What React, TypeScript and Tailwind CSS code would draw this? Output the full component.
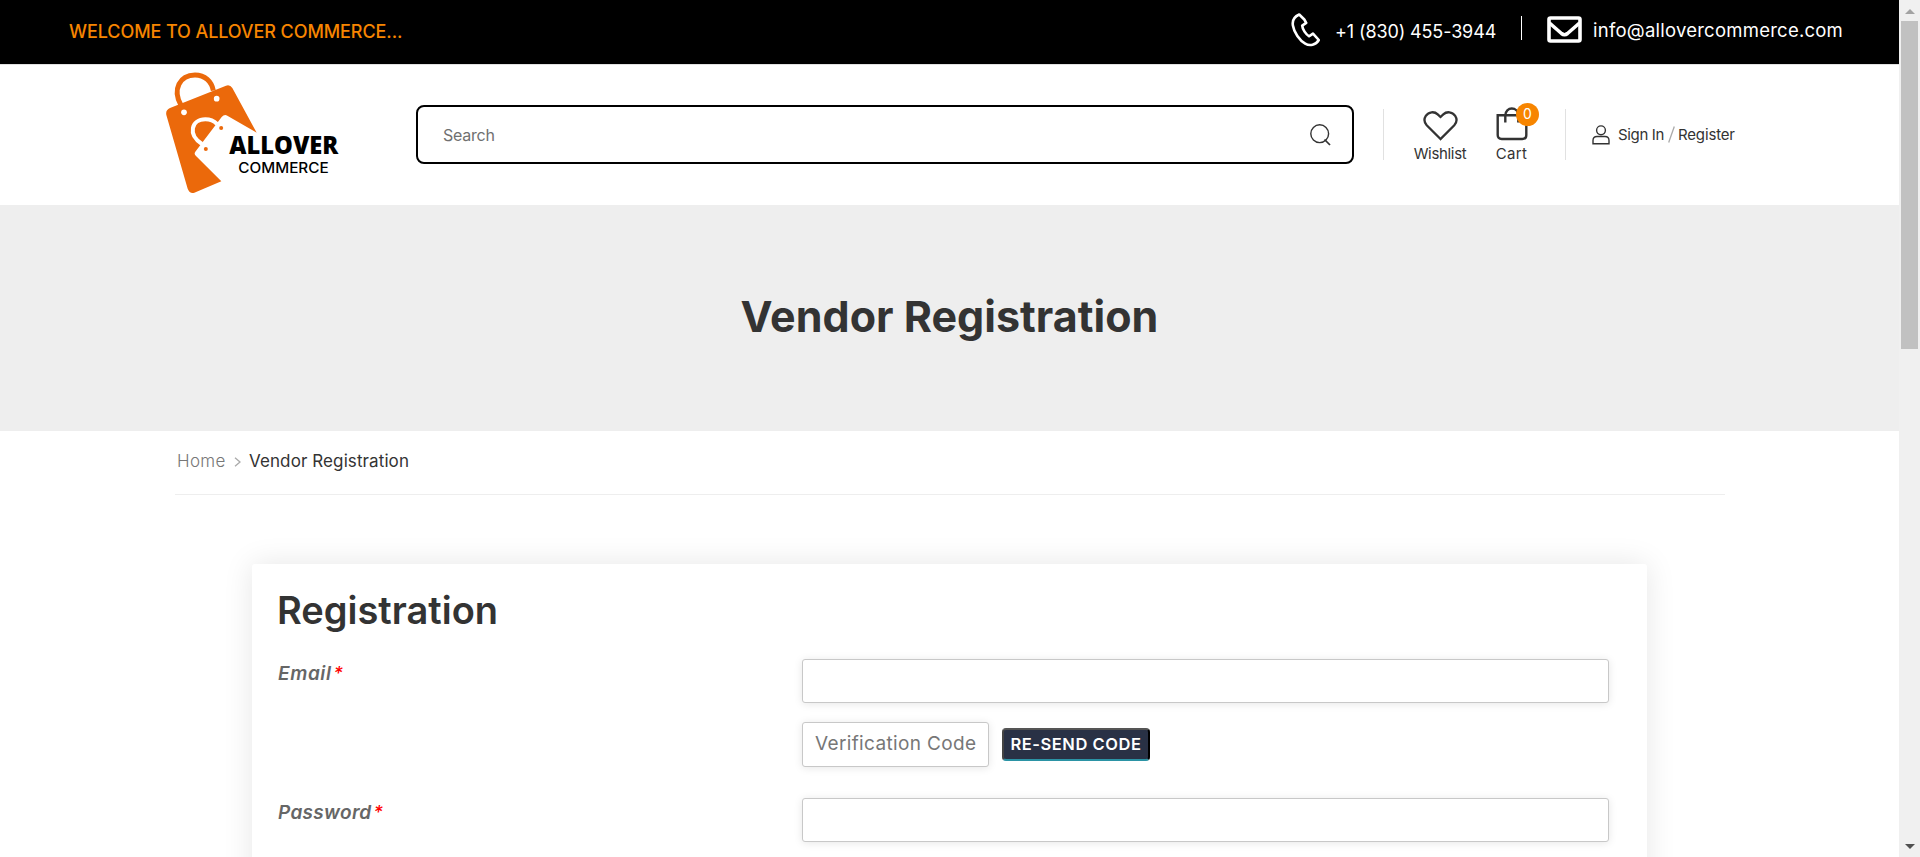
import type { ReactNode } from "react";

function Logo() {
  return (
    <svg viewBox="45 30 525 375" className="h-[125px] w-[175px] shrink-0" aria-label="Allover Commerce">
      <path d="M93 136C66 88 90 45 135 45c30 0 50 20 55 47" fill="none" stroke="#eb690b" strokeWidth="15" />
      <path
        d="M60 144 228 77q12-4 19 7l73 134-88-51q-9-5-17 4l-79 104q-5 7 2 13l76 76-81 34q-14 4-20-12L49 165q-3-15 11-21Z"
        fill="#eb690b"
      />
      <path d="M156 252C112 224 124 178 166 178c14 0 26 5 35 14" fill="none" stroke="#fff" strokeWidth="12" />
      <circle cx="102" cy="157" r="8.5" fill="#fff" />
      <circle cx="200" cy="116" r="8.5" fill="#fff" />
      <circle cx="213.500" cy="204" r="6" fill="#eb690b" />
      <circle cx="167.500" cy="267" r="6" fill="#eb690b" />
      <text x="238" y="281" textLength="327" lengthAdjust="spacingAndGlyphs" fontSize="73" fontWeight="800" className="font-['Open_Sans',sans-serif]">ALLOVER</text>
      <text x="265" y="339" textLength="271" lengthAdjust="spacingAndGlyphs" fontSize="43" fontWeight="500" className="font-['Inter',sans-serif]">COMMERCE</text>
    </svg>
  );
}

function PhoneIcon() {
  return (
    <svg viewBox="0 0 30 34" className="h-[34px] w-[30px]" fill="none" stroke="#fff" strokeWidth="2.6" strokeLinejoin="round">
      <path d="M8.200 1.500C3.600 3.500 1.100 7.500 1.900 12.500c1.100 7 6.700 15 12.300 18.200 4.600 2.600 10.500 1.400 13.600-3.700L22 20.600l-3.800 2.700c-3.400-1.800-6.700-7-7-10.700l4-2.700L13.300 6.500Z" />
    </svg>
  );
}

function MailIcon() {
  return (
    <svg viewBox="0 0 35 27" className="h-[27px] w-[35px]" fill="none" stroke="#fff">
      <rect x="2" y="2" width="31" height="23" rx="1.500" strokeWidth="3.600" />
      <path d="m2.500 7 12 10.500q3 2.500 6 0L32.500 7" strokeWidth="3.600" />
    </svg>
  );
}

function SearchIcon() {
  return (
    <svg viewBox="0 0 21 22" className="h-[22px] w-[21px]" fill="none" stroke="#333" strokeWidth="1.400">
      <circle cx="9.700" cy="9.700" r="8.900" />
      <path d="m14.500 15.500 5.500 5.500" strokeWidth="1.700" />
    </svg>
  );
}

function HeartIcon() {
  return (
    <svg viewBox="0 0 35 30" className="h-[30px] w-[35px]" fill="none" stroke="#333" strokeWidth="2.300">
      <path d="M17.500 28 3.700 14.200C1.300 11.500 1 7.700 2.800 4.900 5.700.6 11.300.1 14.700 3.400L17.500 6l2.800-2.600c3.400-3.300 9-2.800 11.900 1.500 1.800 2.800 1.500 6.600-.9 9.300Z" />
    </svg>
  );
}

function CartIcon() {
  return (
    <svg viewBox="0 0 32 34" className="h-[34px] w-[32px]" fill="none" stroke="#333" strokeWidth="2.400">
      <path d="M1.700 8.200H30.300V28q0 4-4 4H5.700q-4 0-4-4Z" />
      <path d="M9.300 15.500V8.500c0-9.300 13-9.300 13 0v7" />
    </svg>
  );
}

function UserIcon() {
  return (
    <svg viewBox="0 0 18 20" className="h-[20px] w-[18px]" fill="none" stroke="#333" strokeWidth="1.400">
      <circle cx="9" cy="5.300" r="4.400" />
      <path d="M1 18.800v-3.300q0-4 4-4h8q4 0 4 4v3.300Z" />
    </svg>
  );
}

function Field({ label, children }: { label: ReactNode; children: ReactNode }) {
  return (
    <div className="flex">
      <label className="mt-[3px] h-6 w-[525px] shrink-0 pl-px text-[19px] leading-6 font-semibold text-[#666] italic">
        {label}
        <span className="ml-[2px] text-[18px] font-medium text-[#f00]">*</span>
      </label>
      <div>{children}</div>
    </div>
  );
}

const inputStyle =
  "block rounded-[3px] border border-[#c8c8c8] bg-white shadow-[0_1px_8px_rgba(0,0,0,0.1)] outline-none";

function Scrollbar() {
  return (
    <div className="flex w-[21px] shrink-0 flex-col items-center bg-[#f0f0f0]">
      <div className="flex h-[21px] items-center">
        <svg viewBox="0 0 10 5" className="mt-0.5 h-[5px] w-[10px]"><path d="M0 5 5 0l5 5Z" fill="#a3a3a3" /></svg>
      </div>
      <div className="h-[328px] w-[17px] bg-[#c1c1c1]" />
      <div className="mt-auto flex h-[21px] items-center">
        <svg viewBox="0 0 10 5" className="h-[5px] w-[10px]"><path d="m0 0 5 5 5-5Z" fill="#505050" /></svg>
      </div>
    </div>
  );
}

export default function App() {
  return (
    <div className="flex h-[857px] w-[1920px] overflow-hidden bg-white font-['Inter',sans-serif] text-[#333]">
      <div className="flex h-full w-[1899px] flex-col overflow-hidden">
        <div className="flex h-[65px] shrink-0 items-center border-b border-[#e1e1e1] bg-black pl-[69px] text-[18px] whitespace-nowrap text-white">
          <span className="-mt-[2px] w-[1222px] font-medium tracking-[-0.09px] text-[#f78500]">WELCOME TO ALLOVER COMMERCE...</span>
          <div className="-mt-[5px] w-[44px]"><PhoneIcon /></div>
          <span className="-mt-[2px] w-[186px] tracking-[-0.12px]">+1 (830) 455-3944</span>
          <span className="-mt-[8px] h-6 w-px shrink-0 bg-white" />
          <div className="-mt-[6px] ml-[25px] w-[46px]"><MailIcon /></div>
          <span className="-mt-0.5 text-[18.5px] tracking-[0.24px]">info@allovercommerce.com</span>
        </div>

        <header className="flex h-[140px] shrink-0 items-center pb-px pl-[165px] whitespace-nowrap">
          <div className="-mt-[5px] w-[251px]"><Logo /></div>
          <div className="flex h-[59px] w-[938px] items-center justify-between rounded-lg border-2 border-black pr-[21px] pl-[25px]">
            <input
              type="text"
              placeholder="Search"
              className="w-[400px] bg-transparent text-[16px] tracking-[-0.22px] outline-none placeholder:text-[#707070]"
            />
            <div className="pt-px"><SearchIcon /></div>
          </div>
          <span className="ml-[29px] h-[51px] w-px bg-[#e1e1e1]" />
          <a className="mt-px ml-[29px] flex h-[56px] w-[54px] flex-col items-center">
            <div className="flex h-[38px] items-center"><HeartIcon /></div>
            <span className="text-[15px] leading-[18px] tracking-[-0.33px]">Wishlist</span>
          </a>
          <a className="relative mt-px ml-[29px] flex h-[56px] w-8 flex-col items-center">
            <div className="h-[38px]"><CartIcon /></div>
            <span className="-ml-px text-[15px] leading-[18px] tracking-[0.28px]">Cart</span>
            <span className="absolute -top-1 left-5 flex size-[23px] items-center justify-center rounded-full bg-[#f78500] pb-px text-[14px] leading-none text-white">0</span>
          </a>
          <span className="ml-[37px] h-[51px] w-px bg-[#e1e1e1]" />
          <div className="ml-[26px] flex items-center text-[15px]">
            <UserIcon />
            <span className="ml-[8px] pt-px tracking-[-0.35px]">Sign In</span>
            <svg viewBox="0 0 7 17" className="ml-[4px] h-[17px] w-[7px]"><path d="M6.300.5.700 16.500" stroke="#aaa" strokeWidth="1.300" /></svg>
            <span className="ml-[3px] pt-px tracking-[-0.15px]">Register</span>
          </div>
        </header>

        <section className="flex h-[226px] shrink-0 items-center justify-center bg-[#eee] pb-[3px]">
          <h1 className="text-[43px] leading-none font-bold tracking-[0.02px]">Vendor Registration</h1>
        </section>

        <nav className="mx-[175px] flex h-[64px] w-[1550px] shrink-0 items-center border-b border-[#eee] pb-[1px] pl-[2px] text-[17px]">
          <a className="w-[57px] font-light tracking-[0.3px] text-[#777]">Home</a>
          <svg viewBox="0 0 7 10" className="h-[10px] w-[7px]" fill="none" stroke="#aaa" strokeWidth="1.300"><path d="m1 .7 5 4.300-5 4.300" /></svg>
          <span className="ml-[8px] tracking-[0.1px]">Vendor Registration</span>
        </nav>

        <main className="mt-[69px] ml-[252px] h-[600px] w-[1395px] shrink-0 rounded-[3px] bg-white pt-[26px] pl-[25px] shadow-[0_0_30px_rgba(0,0,0,0.1)]">
          <h2 className="h-[69px] text-[38px] leading-[41px] font-semibold">Registration</h2>
          <form className="flex flex-col gap-[31px]">
            <Field label={<span className="tracking-[0.6px]">Email</span>}>
              <input type="email" className={`${inputStyle} h-11 w-[807px]`} />
              <div className="mt-[19px] flex items-center gap-[13px]">
                <input
                  type="text"
                  placeholder="Verification Code"
                  className={`${inputStyle} h-[45px] w-[187px] pb-[2px] pl-[12px] text-[19px] tracking-[0.35px] placeholder:text-[#777]`}
                />
                <button
                  type="button"
                  className="h-[33px] w-[148px] rounded-[4px] border-2 border-t-[#555] border-r-black border-b-[#2b93a5] border-l-[#444] bg-[#293145] pb-px text-[16.5px] leading-none font-semibold tracking-[0.55px] whitespace-nowrap text-white"
                >
                  RE-SEND CODE
                </button>
              </div>
            </Field>
            <Field label={<span className="tracking-[0.3px]">Password</span>}>
              <input type="password" className={`${inputStyle} h-11 w-[807px]`} />
            </Field>
          </form>
        </main>
      </div>
      <Scrollbar />
    </div>
  );
}
